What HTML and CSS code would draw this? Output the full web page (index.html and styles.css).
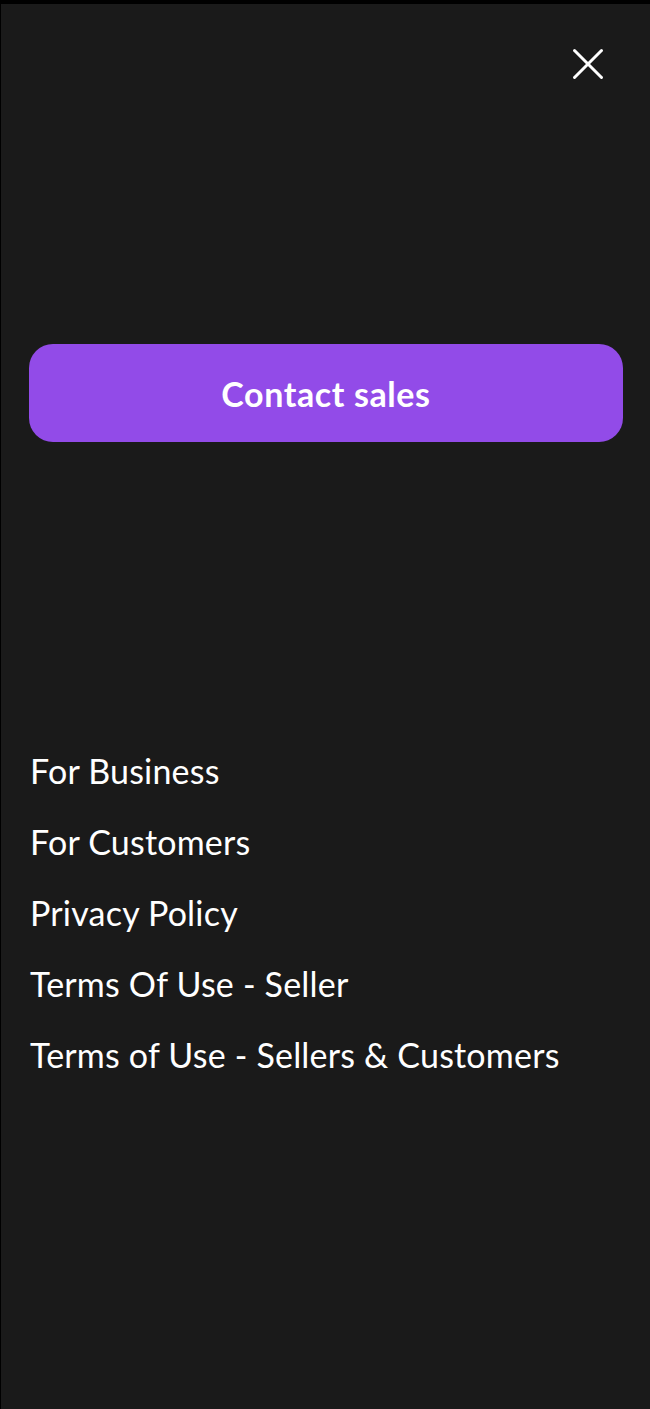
FILE: index.html
```html
<!DOCTYPE html>
<html lang="en">
<head>
<meta charset="utf-8">
<title>Menu</title>
<link rel="stylesheet" href="styles.css">
</head>
<body>
<div class="panel">
  <header class="header">
    <button class="close" aria-label="Close">
      <svg width="32" height="32" viewBox="0 0 32 32" fill="none" stroke="#fff" stroke-width="3" stroke-linecap="round">
        <line x1="2.5" y1="2.5" x2="29.5" y2="29.5"/>
        <line x1="29.5" y1="2.5" x2="2.5" y2="29.5"/>
      </svg>
    </button>
  </header>
  <a class="cta" href="#">Contact sales</a>
  <nav class="links">
    <a href="#">For Business</a>
    <a href="#">For Customers</a>
    <a href="#">Privacy Policy</a>
    <a href="#">Terms Of Use - Seller</a>
    <a href="#">Terms of Use - Sellers &amp; Customers</a>
  </nav>
</div>
</body>
</html>
```
FILE: styles.css
```css
html, body {
  margin: 0;
  padding: 0;
  background: #000;
}
body {
  padding: 4px 0 0 1px;
  height: 1409px;
  box-sizing: border-box;
  font-family: "Lato", "Inter", sans-serif;
}
.panel {
  background: #1a1a1a;
  height: 100%;
  display: flex;
  flex-direction: column;
}
.header {
  display: flex;
  justify-content: flex-end;
  padding: 44px 46px 0 0;
}
.close {
  background: none;
  border: 0;
  padding: 0;
  width: 32px;
  height: 32px;
  display: block;
  cursor: pointer;
}
.close svg { display: block; }
.cta {
  margin: 264px 27px 0 28px;
  height: 98px;
  border-radius: 24px;
  background: #924be8;
  color: #fff;
  display: flex;
  align-items: center;
  justify-content: center;
  font-size: 34px;
  font-weight: 700;
  letter-spacing: 0.6px;
  text-decoration: none;
}
.links {
  margin-top: 293px;
  padding-left: 29px;
  display: flex;
  flex-direction: column;
}
.links a {
  color: #fff;
  text-decoration: none;
  font-size: 34px;
  letter-spacing: 0.2px;
  line-height: 71px;
  font-weight: 400;
}
```
